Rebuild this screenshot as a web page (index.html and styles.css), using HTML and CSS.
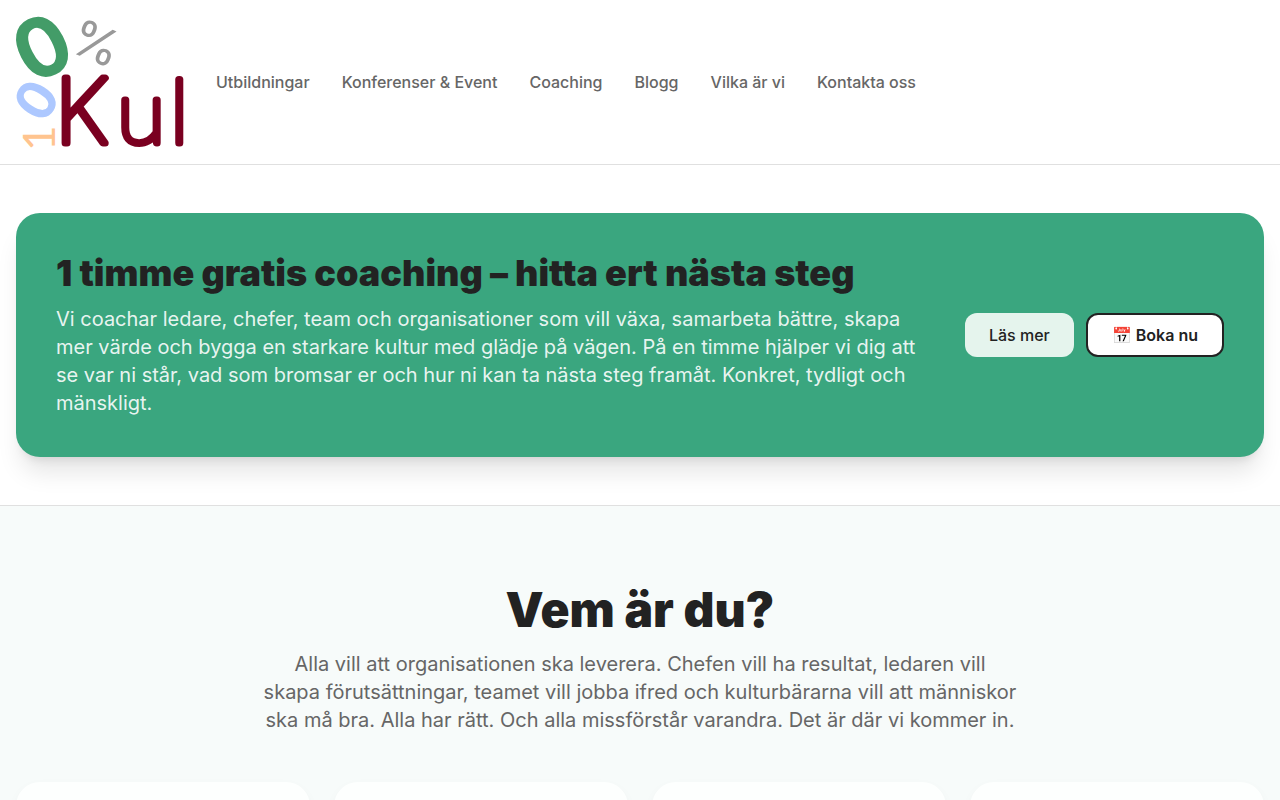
FILE: index.html
```html
<!DOCTYPE html>
<html lang="sv">
<head>
  <meta charset="UTF-8">
  <meta name="viewport" content="width=device-width, initial-scale=1">
  <title>100% Kul</title>
  <link rel="stylesheet" href="styles.css">
</head>
<body>
  <header class="header">
    <a href="#" class="logo">
      <svg width="168" height="132" viewBox="0 0 168 132">
        <text class="logo-one" transform="translate(39 135) rotate(-90)">1</text>
        <text class="logo-blue" transform="translate(20 84) rotate(-58)" x="0" y="19" text-anchor="middle">0</text>
        <text class="logo-green" transform="translate(26 31) rotate(-27)" x="0" y="29" text-anchor="middle">0</text>
        <text class="logo-percent" transform="translate(80 28) rotate(22)" x="0" y="17" text-anchor="middle">%</text>
        <text class="logo-kul" x="39 101 154" y="127"><tspan class="logo-k">K</tspan>ul</text>
      </svg>
    </a>
    <nav class="nav">
      <a href="#">Utbildningar</a>
      <a href="#">Konferenser &amp; Event</a>
      <a href="#">Coaching</a>
      <a href="#">Blogg</a>
      <a href="#">Vilka är vi</a>
      <a href="#">Kontakta oss</a>
    </nav>
  </header>

  <main>
    <section class="offer">
      <div class="banner">
        <div class="banner-text">
          <h2>1 timme gratis coaching – hitta ert nästa steg</h2>
          <p>Vi coachar ledare, chefer, team och organisationer som vill växa, samarbeta bättre, skapa mer värde och bygga en starkare kultur med glädje på vägen. På en timme hjälper vi dig att se var ni står, vad som bromsar er och hur ni kan ta nästa steg framåt. Konkret, tydligt och mänskligt.</p>
        </div>
        <div class="banner-buttons">
          <a href="#" class="btn btn-light">Läs mer</a>
          <a href="#" class="btn btn-book">📅 Boka nu</a>
        </div>
      </div>
    </section>

    <section class="who">
      <h2>Vem är du?</h2>
      <p>Alla vill att organisationen ska leverera. Chefen vill ha resultat, ledaren vill<br>
        skapa förutsättningar, teamet vill jobba ifred och kulturbärarna vill att människor<br>
        ska må bra. Alla har rätt. Och alla missförstår varandra. Det är där vi kommer in.</p>
      <div class="cards">
        <div class="card"></div>
        <div class="card"></div>
        <div class="card"></div>
        <div class="card"></div>
      </div>
    </section>
  </main>
</body>
</html>
```
FILE: styles.css
```css
* { box-sizing: border-box; }
body {
  margin: 0;
  background: #fff;
  color: #222;
  font-family: Inter, "Liberation Sans", sans-serif;
  font-size: 16px;
  line-height: 24px;
}
h2, p { margin: 0; }
h2 { font-weight: 900; }
a { color: inherit; text-decoration: none; }

/* header */
.header {
  display: flex;
  align-items: center;
  gap: 32px;
  padding: 16px;
  border-bottom: 1px solid #e0e0e0;
}
.logo svg { display: block; overflow: visible; }
.logo text { font-family: Inter, sans-serif; stroke-linejoin: round; }
.logo .logo-one { font-family: Lato, sans-serif; font-size: 44px; fill: #ffc48f; }
.logo-blue { font-size: 52px; font-weight: 500; fill: #adc8ff; stroke: #adc8ff; stroke-width: 2px; }
.logo-green { font-size: 80px; font-weight: 600; fill: #439c68; stroke: #439c68; stroke-width: 2px; }
.logo-percent { font-size: 50px; fill: #999; }
.logo .logo-kul { font-family: Lato, sans-serif; font-size: 89px; font-weight: 100; fill: #7a0020; stroke: #7a0020; stroke-width: 7px; }
.logo .logo-k { font-family: Inter, sans-serif; }
.nav { display: flex; gap: 32px; color: #666; font-weight: 500; }
.nav a:hover { color: #222; }

/* green banner */
.offer { padding: 48px 16px; border-bottom: 1px solid #e0e0e0; }
.banner {
  display: flex;
  align-items: center;
  gap: 32px;
  padding: 40px;
  border-radius: 24px;
  background: #3aa67f;
  box-shadow: 0 20px 25px -5px rgba(0,0,0,.1), 0 8px 10px -6px rgba(0,0,0,.1);
}
.banner-text { flex: 1; }
.banner h2 { margin-bottom: 12px; font-size: 36px; line-height: 40px; }
.banner p { color: rgba(255,255,255,.9); font-size: 20px; line-height: 28px; }
.banner-buttons { display: flex; gap: 12px; }
.btn {
  display: flex;
  align-items: center;
  height: 44px;
  padding: 0 24px;
  border-radius: 12px;
  font-weight: 500;
  white-space: nowrap;
}
.btn-light { background: #e5f4ed; }
.btn-book { background: #fff; border: 2px solid #222; font-weight: 600; }

/* who are you */
.who { padding: 80px 16px; background: #f7fbfa; text-align: center; }
.who h2 { margin-bottom: 16px; font-size: 48px; line-height: 48px; }
.who p { max-width: 768px; margin: 0 auto 48px; color: #666; font-size: 20px; line-height: 28px; }
.cards { display: grid; grid-template-columns: repeat(4, 1fr); gap: 24px; }
.card {
  min-height: 240px;
  border-radius: 24px;
  background: #fdfffe;
  box-shadow: 0 4px 12px rgba(0,0,0,.03);
}
```
